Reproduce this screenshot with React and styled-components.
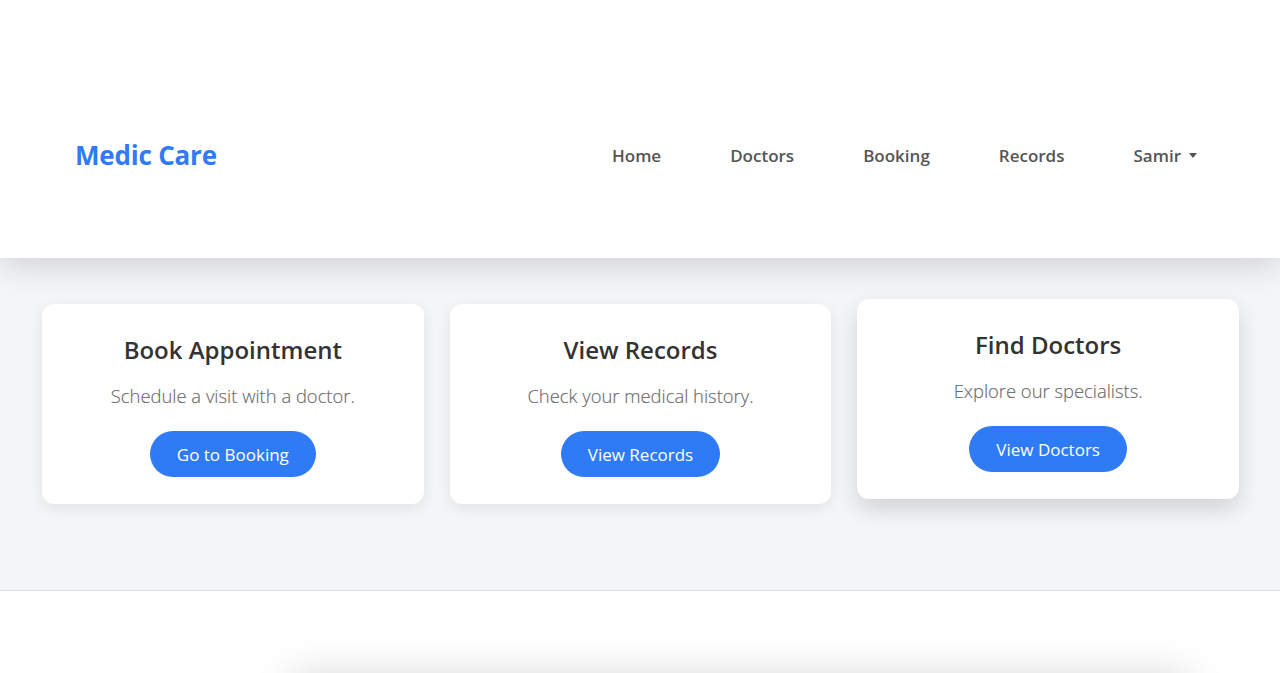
import React from 'react';
import styled, { createGlobalStyle } from 'styled-components';

const GlobalStyle = createGlobalStyle`
  body {
    margin: 0;
    font-family: "Open Sans", "Noto Sans", sans-serif;
    background: #ffffff;
    color: #333;
  }
`;

const cards = [
  { title: 'Book Appointment', text: 'Schedule a visit with a doctor.', action: 'Go to Booking' },
  { title: 'View Records', text: 'Check your medical history.', action: 'View Records' },
  { title: 'Find Doctors', text: 'Explore our specialists.', action: 'View Doctors', raised: true },
];

export default function App() {
  return (
    <>
      <GlobalStyle />
      <Header>
        <Logo>Medic Care</Logo>
        <Nav>
          <NavLink>Home</NavLink>
          <NavLink>Doctors</NavLink>
          <NavLink>Booking</NavLink>
          <NavLink>Records</NavLink>
          <NavLink>
            Samir
            <Caret />
          </NavLink>
        </Nav>
      </Header>
      <Main>
        <CardGrid>
          {cards.map((c) => (
            <Card key={c.title} $raised={c.raised}>
              <CardTitle>{c.title}</CardTitle>
              <CardText>{c.text}</CardText>
              <Button>{c.action}</Button>
            </Card>
          ))}
        </CardGrid>
      </Main>
      <Lower>
        <Panel />
      </Lower>
    </>
  );
}

const Header = styled.header`
  position: relative;
  z-index: 2;
  height: 258px;
  display: flex;
  align-items: center;
  justify-content: space-between;
  padding: 52px 83px 0 75px;
  box-sizing: border-box;
  background: #fff;
  box-shadow: 0 8px 30px rgba(0, 0, 0, 0.14);
`;

const Logo = styled.div`
  color: #2f7bf5;
  font-size: 26px;
  font-weight: 700;
  letter-spacing: -0.2px;
`;

const Nav = styled.nav`
  display: flex;
  align-items: center;
  gap: 69px;
`;

const NavLink = styled.a`
  display: flex;
  align-items: center;
  color: #555;
  font-size: 17px;
  font-weight: 600;
  cursor: pointer;
`;

const Caret = styled.span`
  margin-left: 8px;
  width: 0;
  height: 0;
  border-left: 4.5px solid transparent;
  border-right: 4.5px solid transparent;
  border-top: 5px solid #555;
`;

const Main = styled.main`
  background: #f4f5f7;
  border-bottom: 1px solid #dcdde0;
  padding: 46px 41px 86px 42px;
`;

const CardGrid = styled.div`
  display: grid;
  grid-template-columns: repeat(3, 1fr);
  gap: 26px;
`;

const Card = styled.div`
  background: #fff;
  border-radius: 12px;
  height: 200px;
  box-sizing: border-box;
  display: flex;
  flex-direction: column;
  align-items: center;
  padding-top: 30px;
  box-shadow: ${(p) =>
    p.$raised ? '0 10px 22px rgba(0, 0, 0, 0.14)' : '0 4px 14px rgba(0, 0, 0, 0.08)'};
  transform: ${(p) => (p.$raised ? 'translateY(-5px)' : 'none')};
`;

const CardTitle = styled.h3`
  margin: 0;
  font-size: 24px;
  font-weight: 600;
  color: #333;
  line-height: 32px;
`;

const CardText = styled.p`
  margin: 18px 0 0;
  font-size: 18.4px;
  font-weight: 300;
  color: #6a6a6a;
  line-height: 24px;
  -webkit-text-stroke: 0.15px #6a6a6a;
`;

const Button = styled.button`
  margin-top: 23px;
  height: 46px;
  padding: 0 27px;
  border: none;
  border-radius: 23px;
  background: #2f7bf5;
  color: #fff;
  font-family: inherit;
  font-size: 17px;
  font-weight: 400;
  cursor: pointer;
`;

const Lower = styled.section`
  background: #fff;
  padding: 92px 90px 60px 290px;
`;

const Panel = styled.div`
  height: 300px;
  border-radius: 16px;
  background: #fff;
  box-shadow: 0 -8px 40px rgba(0, 0, 0, 0.16);
`;
